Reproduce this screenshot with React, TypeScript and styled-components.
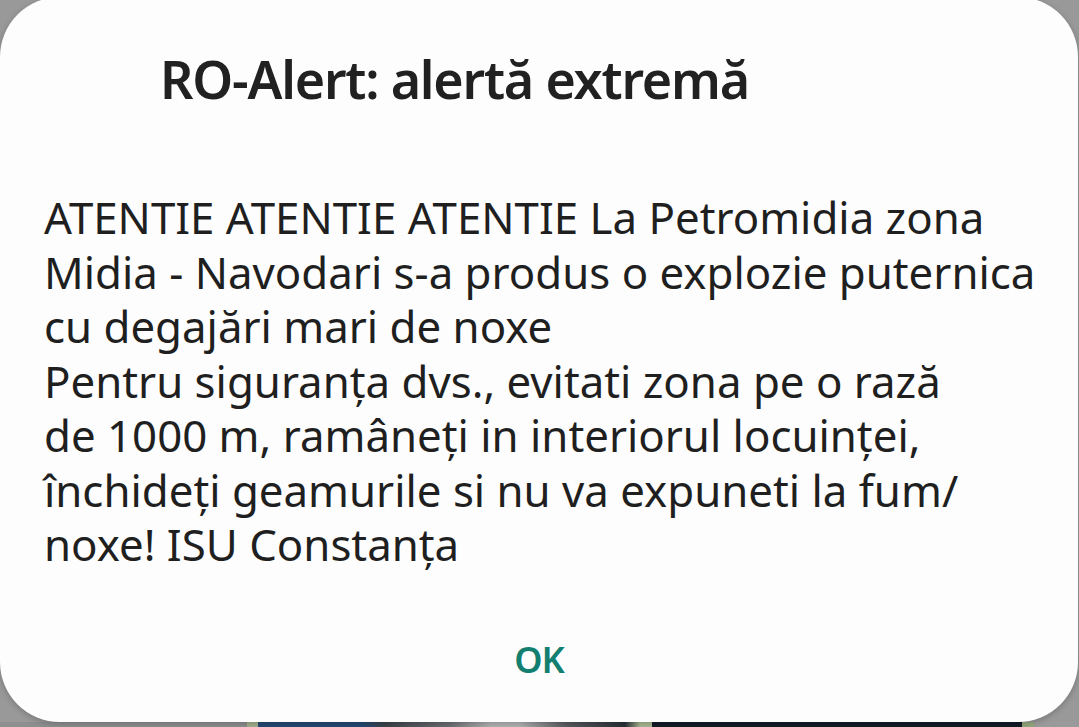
import styled, { createGlobalStyle } from 'styled-components';

const GlobalStyle = createGlobalStyle`
  html, body {
    margin: 0;
    padding: 0;
    background: #999999;
    overflow: hidden;
  }
  body {
    font-family: 'Noto Sans', 'Open Sans', sans-serif;
    -webkit-font-smoothing: antialiased;
  }
`;

const MESSAGE = [
  'ATENTIE ATENTIE ATENTIE La Petromidia zona',
  'Midia - Navodari s-a produs o explozie puternica',
  'cu degajări mari de noxe',
  'Pentru siguranța dvs., evitati zona pe o rază',
  'de 1000 m, ramâneți in interiorul locuinței,',
  'închideți geamurile si nu va expuneti la fum/',
  'noxe! ISU Constanța',
];

const App = () => {
  return (
    <>
      <GlobalStyle />
      <Screen>
        <Dialog role="alertdialog">
          <Title>RO-Alert: alertă extremă</Title>
          <Message>
            {MESSAGE.map((line) => (
              <Line key={line}>{line}</Line>
            ))}
          </Message>
          <Actions>
            <OkButton type="button">OK</OkButton>
          </Actions>
        </Dialog>
        <Wallpaper />
      </Screen>
    </>
  );
};

export default App;

const Screen = styled.main`
  width: 1079px;
  height: 727px;
  display: flex;
  flex-direction: column;
  overflow: hidden;
`;

const Dialog = styled.section`
  box-sizing: border-box;
  width: 1078px;
  height: 725px;
  margin-top: -3px;
  flex-shrink: 0;
  background: #fdfdfd;
  border-radius: 60px;
  box-shadow: 0 2px 6px rgba(0, 0, 0, 0.22);
  display: flex;
  flex-direction: column;
  padding: 56px 0 0 44px;
  position: relative;
  z-index: 1;
`;

const Title = styled.h1`
  margin: 0 0 0 116px;
  font-size: 52px;
  line-height: 52px;
  font-weight: 600;
  letter-spacing: -1.2px;
  color: #212121;
  white-space: nowrap;
`;

const Message = styled.div`
  margin-top: 85px;
  display: flex;
  flex-direction: column;
  color: #1f1f1f;
  font-size: 43.8px;
  line-height: 54.5px;
  font-weight: 400;
`;

const Line = styled.span`
  white-space: nowrap;
`;

const Actions = styled.div`
  margin: 70px 0 0 -44px;
  display: flex;
  justify-content: center;
`;

const OkButton = styled.button`
  border: none;
  background: transparent;
  padding: 0;
  font-family: 'Noto Sans', 'Open Sans', sans-serif;
  font-size: 36px;
  line-height: 36px;
  font-weight: 600;
  letter-spacing: -1px;
  color: #137f70;
  cursor: pointer;
`;

const Wallpaper = styled.div`
  flex: 1;
  background: linear-gradient(
    to right,
    #8f8f8f 0 247px,
    #a3b28e 247px 258px,
    #234a73 258px 362px,
    #3d434a 385px,
    #6d7074 450px,
    #b3b3b3 490px,
    #b3b3b3 520px,
    #5a5d62 565px,
    #2a3038 625px,
    #a9b993 640px 652px,
    #121c27 652px 1022px,
    #93a87d 1022px 1034px,
    #9a9a9a 1034px
  );
`;
